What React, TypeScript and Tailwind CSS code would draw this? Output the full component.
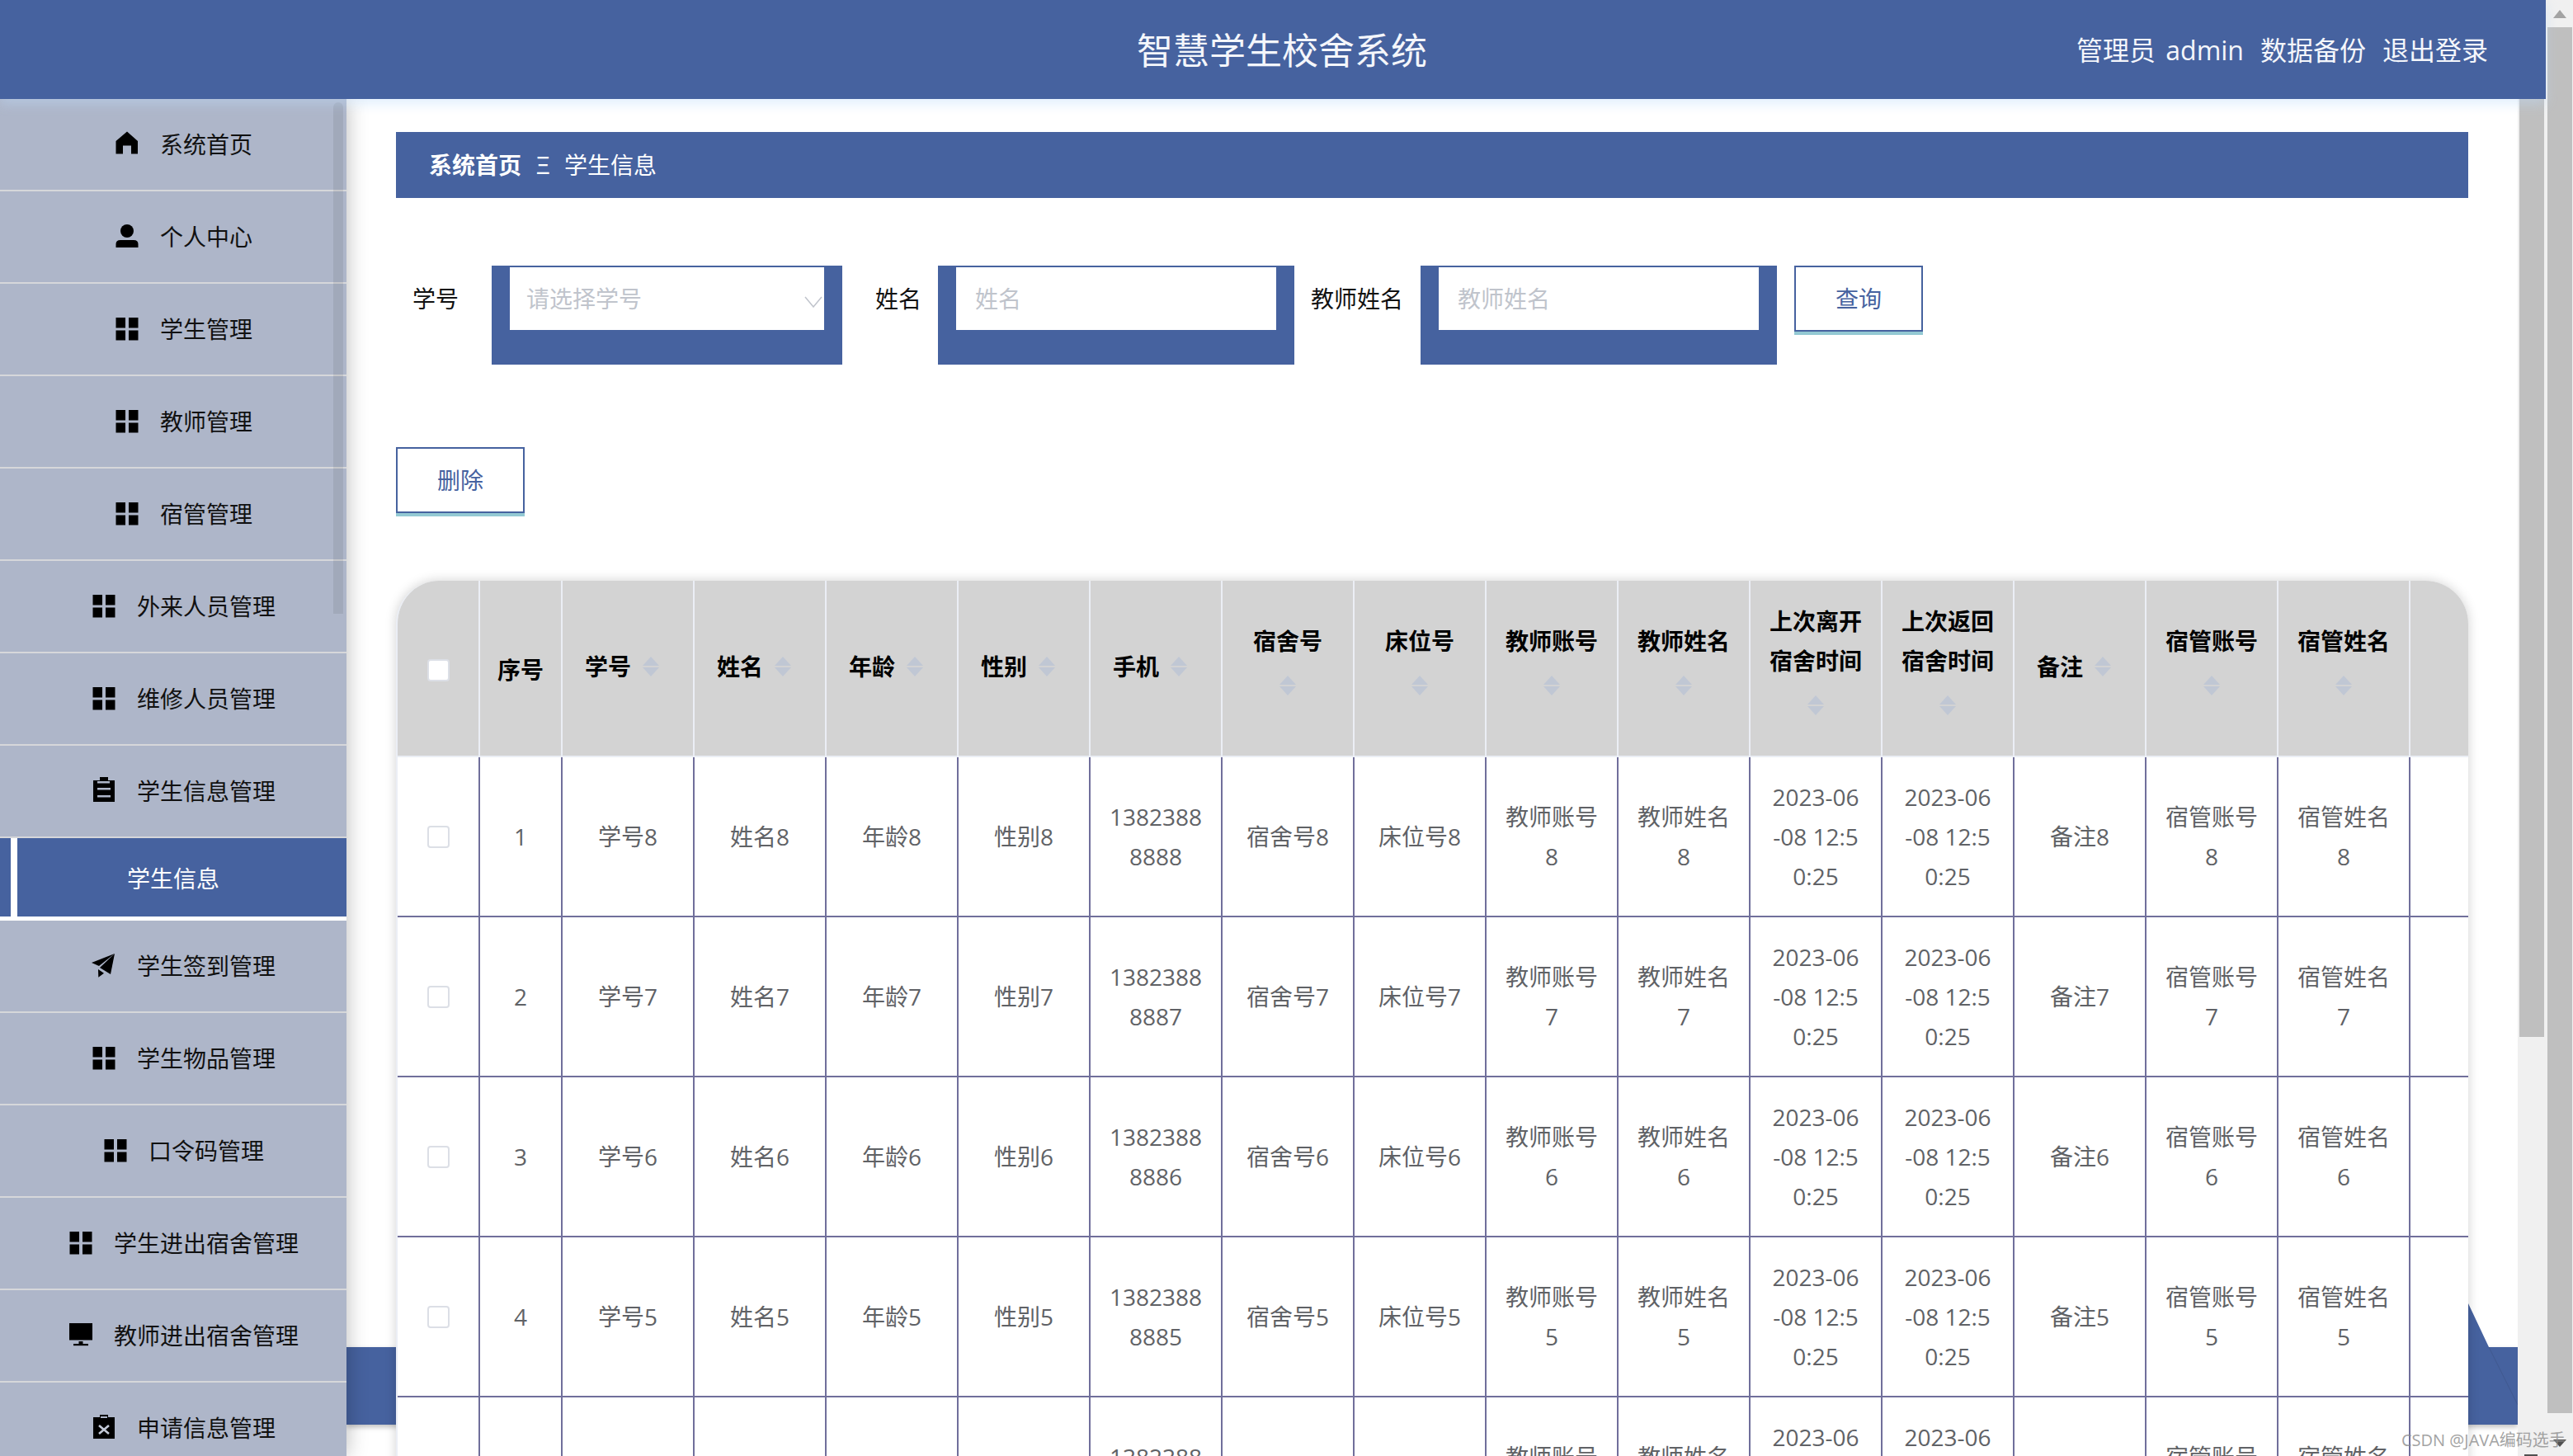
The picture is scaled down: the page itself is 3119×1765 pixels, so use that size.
import React from "react";

const FONT = '"Open Sans", "Noto Sans CJK SC", sans-serif';

type IconName = "home" | "user" | "grid" | "clip" | "plane" | "monitor" | "clipx";

function Icon({ name }: { name: IconName }) {
  return (
    <svg width="28" height="28" viewBox="0 0 28 28" className="shrink-0 overflow-visible" fill="#000">
      {name === "home" && <path d="M14 -1.5 L27 10 V25.5 H19 V15.5 H9 V25.5 H0.5 V10 Z" strokeLinejoin="round" />}
      {name === "user" && (
        <>
          <circle cx="14" cy="7" r="8" />
          <path d="M0.5 27 V23 Q0.5 18 6 18 H22 Q27.5 18 27.5 23 V27 Z" />
        </>
      )}
      {name === "grid" && (
        <>
          <rect x="0.5" y="0" width="11.5" height="12.5" />
          <rect x="16" y="0" width="11.5" height="12.5" />
          <rect x="0.5" y="15.5" width="11.5" height="12" />
          <rect x="16" y="15.5" width="11.5" height="12" />
        </>
      )}
      {name === "clip" && (
        <>
          <rect x="1" y="1" width="26" height="26" />
          <rect x="9" y="-3" width="10" height="4" />
          <rect x="6" y="2" width="15" height="2.5" fill="#aeb6c9" />
          <rect x="6" y="10" width="16" height="2.5" fill="#aeb6c9" />
          <rect x="6" y="19" width="16" height="2.5" fill="#aeb6c9" />
        </>
      )}
      {name === "clipx" && (
        <>
          <rect x="1" y="1" width="26" height="26" />
          <rect x="9" y="-2" width="10" height="3" />
          <rect x="10" y="0" width="8" height="2" fill="#aeb6c9" />
          <path d="M8 11 L20 21 M20 11 L8 21" stroke="#c4cad8" strokeWidth="2.6" />
        </>
      )}
      {name === "plane" && (
        <>
          <path d="M-1 10 L27 -1 L8 14 Z" />
          <path d="M27 -1 L22 24 L9 16 Z" />
          <path d="M7 18 L14 22.7 L7.3 27.7 Z" />
        </>
      )}
      {name === "monitor" && (
        <>
          <rect x="0" y="-1" width="28" height="20.5" />
          <rect x="11.5" y="21" width="5" height="3" />
          <rect x="5" y="24" width="18" height="2.2" />
        </>
      )}
    </svg>
  );
}

function NavRow({ icon, label }: { icon: IconName; label: string }) {
  return (
    <div className="flex h-[112px] items-center justify-center gap-[26px] border-b-2 border-[#d6d7da] bg-[#aeb6c9] pl-[26px] text-[28px] text-[#111]">
      <Icon name={icon} />
      <span>{label}</span>
    </div>
  );
}

function Carets() {
  return (
    <svg width="20" height="24" viewBox="0 0 20 24" fill="#c0c7d4">
      <path d="M10 0 L20 11 H0 Z" />
      <path d="M0 13 H20 L10 24 Z" />
    </svg>
  );
}

function Check() {
  return <div className="mx-auto h-[27px] w-[27px] rounded-[4px] border-2 border-[#dcdfe6] bg-white" />;
}

const singleHeads = ["学号", "姓名", "年龄", "性别", "手机"];
const wrapHeads: string[][] = [
  ["宿舍号"],
  ["床位号"],
  ["教师账号"],
  ["教师姓名"],
  ["上次离开", "宿舍时间"],
  ["上次返回", "宿舍时间"],
];

function SortSingle({ t }: { t: string }) {
  return (
    <th className="border-r-2 border-b-2 border-[#ebeef5] bg-[#d3d3d3] p-0 align-middle">
      <div className="flex items-center justify-center pb-[4px]">
        <span className="leading-[48px]">{t}</span>
        <span className="flex w-[48px] justify-center">
          <Carets />
        </span>
      </div>
    </th>
  );
}

function SortWrap({ lines }: { lines: string[] }) {
  return (
    <th className="border-r-2 border-b-2 border-[#ebeef5] bg-[#d3d3d3] p-0 align-middle">
      <div className="flex flex-col items-center pb-[12px]">
        {lines.map((l) => (
          <div key={l} className="leading-[48px]">
            {l}
          </div>
        ))}
        <div className="flex h-[54px] items-center pt-[6px]">
          <Carets />
        </div>
      </div>
    </th>
  );
}

function Td({ lines }: { lines: string[] }) {
  return (
    <td className="border-r-2 border-b-2 border-[#706f9b] p-0 text-center align-middle leading-[48px]">
      {lines.map((l, i) => (
        <div key={i}>{l}</div>
      ))}
    </td>
  );
}

const rows = [8, 7, 6, 5, 4];

export default function App() {
  return (
    <div className="flex h-[1765px] w-[3119px] overflow-hidden bg-white" style={{ fontFamily: FONT }}>
      <div className="flex h-full w-[3086px] flex-col">
        <header className="relative z-20 flex h-[120px] shrink-0 items-center bg-[#46629f] pl-[1378px] pr-[70px] text-[#f4f6fb] shadow-[0_6px_14px_rgba(190,220,250,0.45)]">
          <span className="pt-[2px] text-[44px] leading-none">智慧学生校舍系统</span>
          <div className="ml-auto flex items-center gap-[20px] pt-[2px] text-[32px]">
            <span className="[word-spacing:4px]">管理员 admin</span>
            <span>数据备份</span>
            <span>退出登录</span>
          </div>
        </header>

        <div className="flex min-h-0 flex-1">
          <aside className="relative z-10 h-full w-[420px] shrink-0 overflow-hidden bg-[#aeb6c9] shadow-[0_0_24px_rgba(0,0,0,0.28)]">
            <NavRow icon="home" label="系统首页" />
            <NavRow icon="user" label="个人中心" />
            <NavRow icon="grid" label="学生管理" />
            <NavRow icon="grid" label="教师管理" />
            <NavRow icon="grid" label="宿管管理" />
            <NavRow icon="grid" label="外来人员管理" />
            <NavRow icon="grid" label="维修人员管理" />
            <NavRow icon="clip" label="学生信息管理" />
            <div className="flex h-[100px] border-b-[5px] border-white bg-[#46629f] text-[28px] text-white">
              <div className="ml-[13px] w-[8px] bg-white" />
              <div className="flex flex-1 items-center justify-center pt-[2px] pr-[21px]">学生信息</div>
            </div>
            <NavRow icon="plane" label="学生签到管理" />
            <NavRow icon="grid" label="学生物品管理" />
            <NavRow icon="grid" label="口令码管理" />
            <NavRow icon="grid" label="学生进出宿舍管理" />
            <NavRow icon="monitor" label="教师进出宿舍管理" />
            <NavRow icon="clipx" label="申请信息管理" />
            <div className="absolute top-[4px] left-[404px] h-[620px] w-[12px] rounded-t-[6px] bg-[rgba(0,0,0,0.07)]" />
          </aside>

          <main className="relative min-w-0 flex-1 overflow-hidden bg-white px-[60px] pt-[40px]">
            <div className="absolute top-[1513px] left-0 h-[94px] w-full bg-[#46629f] shadow-[0_3px_6px_rgba(0,0,0,0.25)]" />
            <svg
              className="absolute top-[1460px] right-0"
              width="60"
              height="147"
              viewBox="0 0 60 147"
            >
              <path d="M0 0 L25 53 H60 V147 H0 Z" fill="#46629f" />
              <path d="M25 53 L60 123" stroke="#40598f" strokeWidth="1" />
            </svg>

            <div className="relative">
              <div className="flex h-[80px] items-center bg-[#46629f] pl-[40px] text-[28px] text-white">
                <span className="font-bold">系统首页</span>
                <span className="mx-[18px] w-[16px] text-center text-[30px] leading-none">Ξ</span>
                <span>学生信息</span>
              </div>

              <div className="mt-[82px] flex pl-[20px] text-[28px]">
                <span className="w-[56px] leading-[80px] text-[#111]">学号</span>
                <div className="ml-[40px] h-[120px] w-[425px] bg-[#46629f] px-[22px] pt-[2px]">
                  <div className="flex h-[76px] items-center justify-between bg-white pl-[20px] pr-[2px] text-[#c0c4cc]">
                    <span>请选择学号</span>
                    <svg width="22" height="14" viewBox="0 0 22 14" fill="none" className="mt-[8px]">
                      <path d="M1 1 L11 13 L21 1" stroke="#c0c4cc" strokeWidth="1.5" />
                    </svg>
                  </div>
                </div>
                <span className="ml-[40px] w-[56px] leading-[80px] text-[#111]">姓名</span>
                <div className="ml-[20px] h-[120px] w-[432px] bg-[#46629f] px-[22px] pt-[2px]">
                  <input
                    placeholder="姓名"
                    className="h-[76px] w-full bg-white pl-[23px] outline-none placeholder:text-[#c0c4cc]"
                  />
                </div>
                <span className="ml-[20px] w-[112px] leading-[80px] text-[#111]">教师姓名</span>
                <div className="ml-[21px] h-[120px] w-[432px] bg-[#46629f] px-[22px] pt-[2px]">
                  <input
                    placeholder="教师姓名"
                    className="h-[76px] w-full bg-white pl-[23px] outline-none placeholder:text-[#c0c4cc]"
                  />
                </div>
                <button className="ml-[21px] h-[84px] w-[156px] border-2 border-b-0 border-[#46629f] bg-white text-[#46629f]">
                  <span className="flex h-[76px] items-center justify-center">查询</span>
                  <span className="-mx-[2px] block h-[2px] bg-[#46629f]" />
                  <span className="-mx-[2px] block h-[4px] bg-[#93c9d3]" />
                </button>
              </div>

              <div className="mt-[100px] flex">
                <button className="h-[84px] w-[156px] border-2 border-b-0 border-[#46629f] bg-white text-[28px] text-[#46629f]">
                  <span className="flex h-[76px] items-center justify-center">删除</span>
                  <span className="-mx-[2px] block h-[2px] bg-[#46629f]" />
                  <span className="-mx-[2px] block h-[4px] bg-[#93c9d3]" />
                </button>
              </div>

              <div className="mt-[78px] overflow-hidden rounded-t-[52px] border-l-2 border-[#ebeef5] bg-white text-[28px] text-[#606266] shadow-[0_0_14px_rgba(0,0,0,0.18)]">
                <table className="w-full table-fixed border-separate border-spacing-0">
                  <colgroup>
                    <col className="w-[100px]" />
                    <col className="w-[100px]" />
                    {Array.from({ length: 14 }).map((_, i) => (
                      <col key={i} className="w-[160px]" />
                    ))}
                    <col />
                  </colgroup>
                  <thead>
                    <tr className="h-[214px] font-bold text-black">
                      <th className="border-r-2 border-b-2 border-[#ebeef5] bg-[#d3d3d3] p-0 align-middle">
                        <div className="pt-[4px]">
                          <Check />
                        </div>
                      </th>
                      <th className="border-r-2 border-b-2 border-[#ebeef5] bg-[#d3d3d3] p-0 align-middle">
                        <div className="pt-[4px]">序号</div>
                      </th>
                      {singleHeads.map((t) => (
                        <SortSingle key={t} t={t} />
                      ))}
                      {wrapHeads.map((l, i) => (
                        <SortWrap key={i} lines={l} />
                      ))}
                      <SortSingle t="备注" />
                      <SortWrap lines={["宿管账号"]} />
                      <SortWrap lines={["宿管姓名"]} />
                      <th className="border-b-2 border-[#ebeef5] bg-[#d3d3d3] p-0" />
                    </tr>
                  </thead>
                  <tbody>
                    {rows.map((n, i) => (
                      <tr key={n} className="h-[194px]">
                        <td className="border-r-2 border-b-2 border-[#706f9b] p-0 align-middle">
                          <Check />
                        </td>
                        <Td lines={[String(i + 1)]} />
                        <Td lines={[`学号${n}`]} />
                        <Td lines={[`姓名${n}`]} />
                        <Td lines={[`年龄${n}`]} />
                        <Td lines={[`性别${n}`]} />
                        <Td lines={["1382388", `888${n}`]} />
                        <Td lines={[`宿舍号${n}`]} />
                        <Td lines={[`床位号${n}`]} />
                        <Td lines={["教师账号", String(n)]} />
                        <Td lines={["教师姓名", String(n)]} />
                        <Td lines={["2023-06", "-08 12:5", "0:25"]} />
                        <Td lines={["2023-06", "-08 12:5", "0:25"]} />
                        <Td lines={[`备注${n}`]} />
                        <Td lines={["宿管账号", String(n)]} />
                        <Td lines={["宿管姓名", String(n)]} />
                        <td className="border-b-2 border-[#706f9b] p-0" />
                      </tr>
                    ))}
                  </tbody>
                </table>
              </div>
            </div>
          </main>

          <div className="relative w-[34px] shrink-0 bg-[#f0f0f0]">
            <div className="ml-[2px] h-[1137px] w-[30px] bg-[#bfbfbf]" />
            <div className="absolute right-[10px] bottom-0 h-[2px] w-[16px] bg-[#505050]" />
          </div>
        </div>
      </div>

      <div className="relative w-[33px] shrink-0 bg-[#f0f0f0]">
        <svg className="absolute top-[12px] left-[9px]" width="16" height="10" viewBox="0 0 16 10">
          <path d="M8 0 L16 10 H0 Z" fill="#a3a3a3" />
        </svg>
        <div className="mt-[33px] ml-[2px] h-[1680px] w-[30px] bg-[#bfbfbf]" />
        <svg className="absolute top-[1745px] left-[9px]" width="16" height="9" viewBox="0 0 16 9">
          <path d="M0 0 H16 L8 9 Z" fill="#505050" />
        </svg>
      </div>

      <div className="absolute top-[1731px] left-[2911px] z-30 text-[20px] whitespace-nowrap text-[#8d8d8d] opacity-80">
        CSDN @JAVA编码选手
      </div>
    </div>
  );
}
